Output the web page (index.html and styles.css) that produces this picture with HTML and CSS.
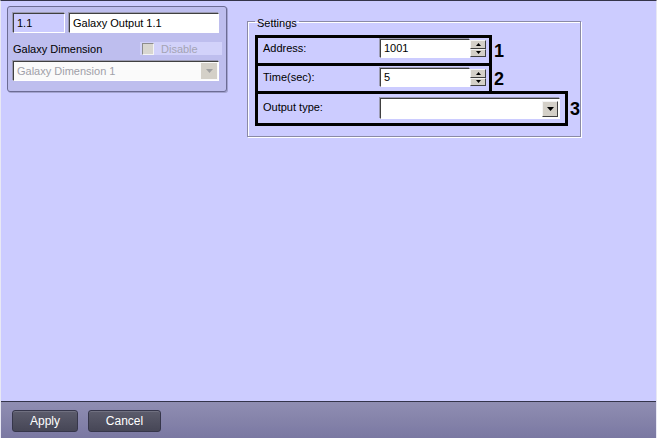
FILE: index.html
```html
<!DOCTYPE html>
<html lang="en">
<head>
    <meta charset="UTF-8">
    <title>Galaxy Output 1.1</title>
    <link rel="stylesheet" href="styles.css">
</head>
<body>
    <div class="window">
        <div class="main">
            <div class="object-panel">
                <div class="panel-row">
                    <div class="field id-field">1.1</div>
                    <div class="field name-field">Galaxy Output 1.1</div>
                </div>
                <div class="panel-row dim-row">
                    <span class="dim-label">Galaxy Dimension</span>
                    <span class="check disabled">
                        <span class="check-box"></span>
                        <span class="check-text">Disable</span>
                    </span>
                </div>
                <div class="combo dim-combo disabled">
                    <span class="combo-text">Galaxy Dimension 1</span>
                    <span class="combo-btn">
                        <svg width="7" height="4" viewBox="0 0 7 4"><path d="M0 0h7L3.5 4z" fill="#a0a0a0"/></svg>
                    </span>
                </div>
            </div>

            <fieldset class="settings">
                <legend>Settings</legend>
                <div class="param-row">
                    <div class="param-box row-1">
                        <span class="param-label">Address:</span>
                        <div class="spin">
                            <div class="field spin-field">1001</div>
                            <div class="spin-btns">
                                <span class="spin-btn"><svg width="5" height="3" viewBox="0 0 5 3"><path d="M2.5 0L5 3H0z" fill="#000"/></svg></span>
                                <span class="spin-btn"><svg width="5" height="3" viewBox="0 0 5 3"><path d="M0 0h5L2.5 3z" fill="#000"/></svg></span>
                            </div>
                        </div>
                    </div>
                    <span class="param-num">1</span>
                </div>
                <div class="param-row">
                    <div class="param-box row-2">
                        <span class="param-label">Time(sec):</span>
                        <div class="spin">
                            <div class="field spin-field">5</div>
                            <div class="spin-btns">
                                <span class="spin-btn"><svg width="5" height="3" viewBox="0 0 5 3"><path d="M2.5 0L5 3H0z" fill="#000"/></svg></span>
                                <span class="spin-btn"><svg width="5" height="3" viewBox="0 0 5 3"><path d="M0 0h5L2.5 3z" fill="#000"/></svg></span>
                            </div>
                        </div>
                    </div>
                    <span class="param-num">2</span>
                </div>
                <div class="param-row">
                    <div class="param-box row-3 wide">
                        <span class="param-label">Output type:</span>
                        <div class="combo type-combo">
                            <span class="combo-text"></span>
                            <span class="combo-btn">
                                <svg width="7" height="4" viewBox="0 0 7 4"><path d="M0 0h7L3.5 4z" fill="#000"/></svg>
                            </span>
                        </div>
                    </div>
                    <span class="param-num">3</span>
                </div>
            </fieldset>
        </div>

        <div class="footer">
            <button class="btn apply-btn">Apply</button>
            <button class="btn cancel-btn">Cancel</button>
        </div>
    </div>
</body>
</html>
```

FILE: styles.css
```css
body {
    margin: 0;
    font-family: "Liberation Sans", Arial, sans-serif;
    font-size: 11px;
    color: #000;
    overflow: hidden;
}
.window {
    width: 657px;
    height: 438px;
    box-sizing: border-box;
    display: flex;
    flex-direction: column;
    background-color: #ccccff;
    border-top: 1px solid #34344a;
    border-left: 1px solid #e8e8f4;
    border-right: 1px solid #e8e8f4;
}
.main {
    flex: 1;
    display: flex;
    align-items: flex-start;
    padding: 5px 0 0 6px;
}

/* object panel */
.object-panel {
    width: 220px;
    height: 86px;
    box-sizing: border-box;
    padding: 6px 0 0 5px;
    background-color: #bebeee;
    border: 1px solid #6c6c94;
    border-radius: 3px;
    box-shadow: 1px 1px 0 #a4a4d0;
}
.panel-row {
    display: flex;
    gap: 4px;
}
.field {
    box-sizing: border-box;
    height: 20px;
    line-height: 18px;
    padding-left: 3px;
    background-color: #fff;
    border: 1px solid;
    border-color: #404040 #ffffff #ffffff #404040;
    box-shadow: -1px -1px 0 #9c9cb4;
    white-space: nowrap;
}
.id-field {
    width: 52px;
    background-color: #ccccff;
}
.name-field {
    width: 150px;
}
.dim-row {
    margin-top: 9px;
    height: 13px;
    align-items: center;
}
.dim-label {
    width: 123px;
}
.check {
    display: flex;
    align-items: center;
    width: 80px;
    height: 13px;
    padding-left: 2px;
    background-color: #d2d2fa;
}
.check-box {
    width: 12px;
    height: 12px;
    box-sizing: border-box;
    background-color: #d8d6d0;
    border: 1px solid;
    border-color: #8c8c8c #f4f4f4 #f4f4f4 #8c8c8c;
}
.check-text {
    margin-left: 7px;
    color: #a4a4b4;
}

/* combo boxes */
.combo {
    box-sizing: border-box;
    display: flex;
    align-items: center;
    height: 20px;
    background-color: #fff;
    border: 1px solid;
    border-color: #404040 #ffffff #ffffff #404040;
    box-shadow: -1px -1px 0 #9c9cb4;
}
.combo-text {
    flex: 1;
    padding-left: 3px;
}
.combo-btn {
    display: flex;
    align-items: center;
    justify-content: center;
    width: 16px;
    height: 16px;
    margin-right: 1px;
    box-sizing: border-box;
    background-color: #d4d0c8;
    border: 1px solid;
    border-color: #f4f4f4 #404040 #404040 #f4f4f4;
}
.dim-combo {
    width: 206px;
    margin-top: 6px;
    background-color: #fafafa;
}
.dim-combo .combo-text {
    color: #a0a0a8;
}
.dim-combo .combo-btn {
    border-color: #d4d0c8;
}
.type-combo {
    width: 180px;
    height: 21px;
}

/* settings group */
.settings {
    width: 334px;
    height: 124px;
    box-sizing: border-box;
    margin: 7px 0 0 20px;
    padding: 5px 0 0 7px;
    border: 1px solid #8a8aa6;
    box-shadow: inset 1px 1px 0 #fff, 1px 1px 0 #fff;
}
.settings legend {
    padding: 4px 2px 0;
    line-height: 13px;
}
.param-row {
    display: flex;
    align-items: center;
    margin-top: -3px;
}
.param-row:first-of-type {
    margin-top: 0;
}
.param-box {
    display: flex;
    align-items: flex-start;
    width: 237px;
    height: 31px;
    box-sizing: border-box;
    border: 3px solid #000;
}
.param-box.wide {
    width: 313px;
    height: 35px;
}
.row-1 {
    padding-top: 1px;
}
.row-2 {
    padding-top: 2px;
}
.row-3 {
    padding-top: 4px;
}
.param-label {
    width: 117px;
    padding-left: 5px;
    line-height: 18px;
}
.spin {
    display: flex;
}
.spin-field {
    width: 90px;
    height: 19px;
    line-height: 17px;
}
.spin-btns {
    display: flex;
    flex-direction: column;
    width: 16px;
    height: 19px;
    padding: 1px 0;
    box-sizing: border-box;
}
.spin-btn {
    flex: 1;
    display: flex;
    align-items: center;
    justify-content: center;
    box-sizing: border-box;
    background-color: #d4d0c8;
    border: 1px solid;
    border-color: #f4f4f4 #404040 #404040 #f4f4f4;
}
.param-num {
    margin-left: 2px;
    font-size: 18px;
    font-weight: bold;
    line-height: 20px;
}

/* footer */
.footer {
    height: 37px;
    box-sizing: border-box;
    display: flex;
    align-items: flex-start;
    gap: 10px;
    padding: 8px 0 0 11px;
    border-top: 1px solid #34344a;
    background: linear-gradient(#908eb2, #7a78a2);
}
.btn {
    height: 22px;
    padding: 0;
    font-family: "Liberation Sans", Arial, sans-serif;
    font-size: 12px;
    color: #fff;
    background: linear-gradient(#5c5c6c, #464656);
    border: 1px solid #36364a;
    border-radius: 3px;
    box-shadow: inset 0 1px 0 #707080;
}
.apply-btn {
    width: 66px;
}
.cancel-btn {
    width: 73px;
}
```
